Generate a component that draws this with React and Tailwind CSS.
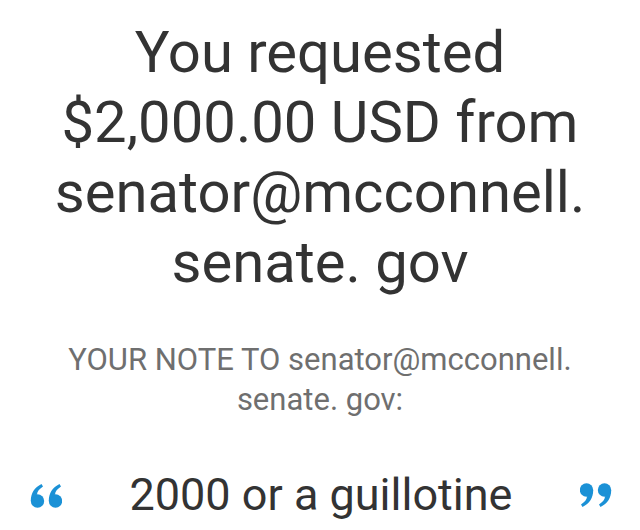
function QuoteMark({ open }) {
  return (
    <svg width="32" height="25" viewBox="0 0 32 25" className="text-[#1b91d6]">
      <g fill="currentColor" transform={open ? "rotate(180 16 12.5)" : undefined}>
        <circle cx="6.5" cy="7" r="6.7" />
        <path d="M13.2 7 C13.2 15 9.5 20.5 2.5 24 L1 21.5 C4.8 19 6.8 16.5 7 13.5 Z" />
        <circle cx="24.5" cy="7" r="6.7" />
        <path d="M31.2 7 C31.2 15 27.5 20.5 20.5 24 L19 21.5 C22.8 19 24.8 16.5 25 13.5 Z" />
      </g>
    </svg>
  );
}

export default function App() {
  return (
    <div className="w-[640px] h-[530px] bg-white overflow-hidden font-['Roboto',sans-serif] text-[#333333]">
      {/* Request heading */}
      <h1 className="pt-[17px] px-[30px] text-center text-[58px] leading-[70px] font-normal">
        You requested
        <br />
        $2,000.00 USD from
        <br />
        senator@mcconnell.
        <br />
        senate. gov
      </h1>

      {/* Note label */}
      <p className="mt-[43px] text-center text-[31px] leading-[40px] text-[#6f6f6f]">
        YOUR NOTE TO senator@mcconnell.
        <br />
        senate. gov:
      </p>

      {/* Note */}
      <div className="mt-[49px] flex items-center justify-between pl-[30px] pr-[28px]">
        <QuoteMark open />
        <p className="text-[45px] leading-[52px]">2000 or a guillotine</p>
        <QuoteMark />
      </div>
    </div>
  );
}
